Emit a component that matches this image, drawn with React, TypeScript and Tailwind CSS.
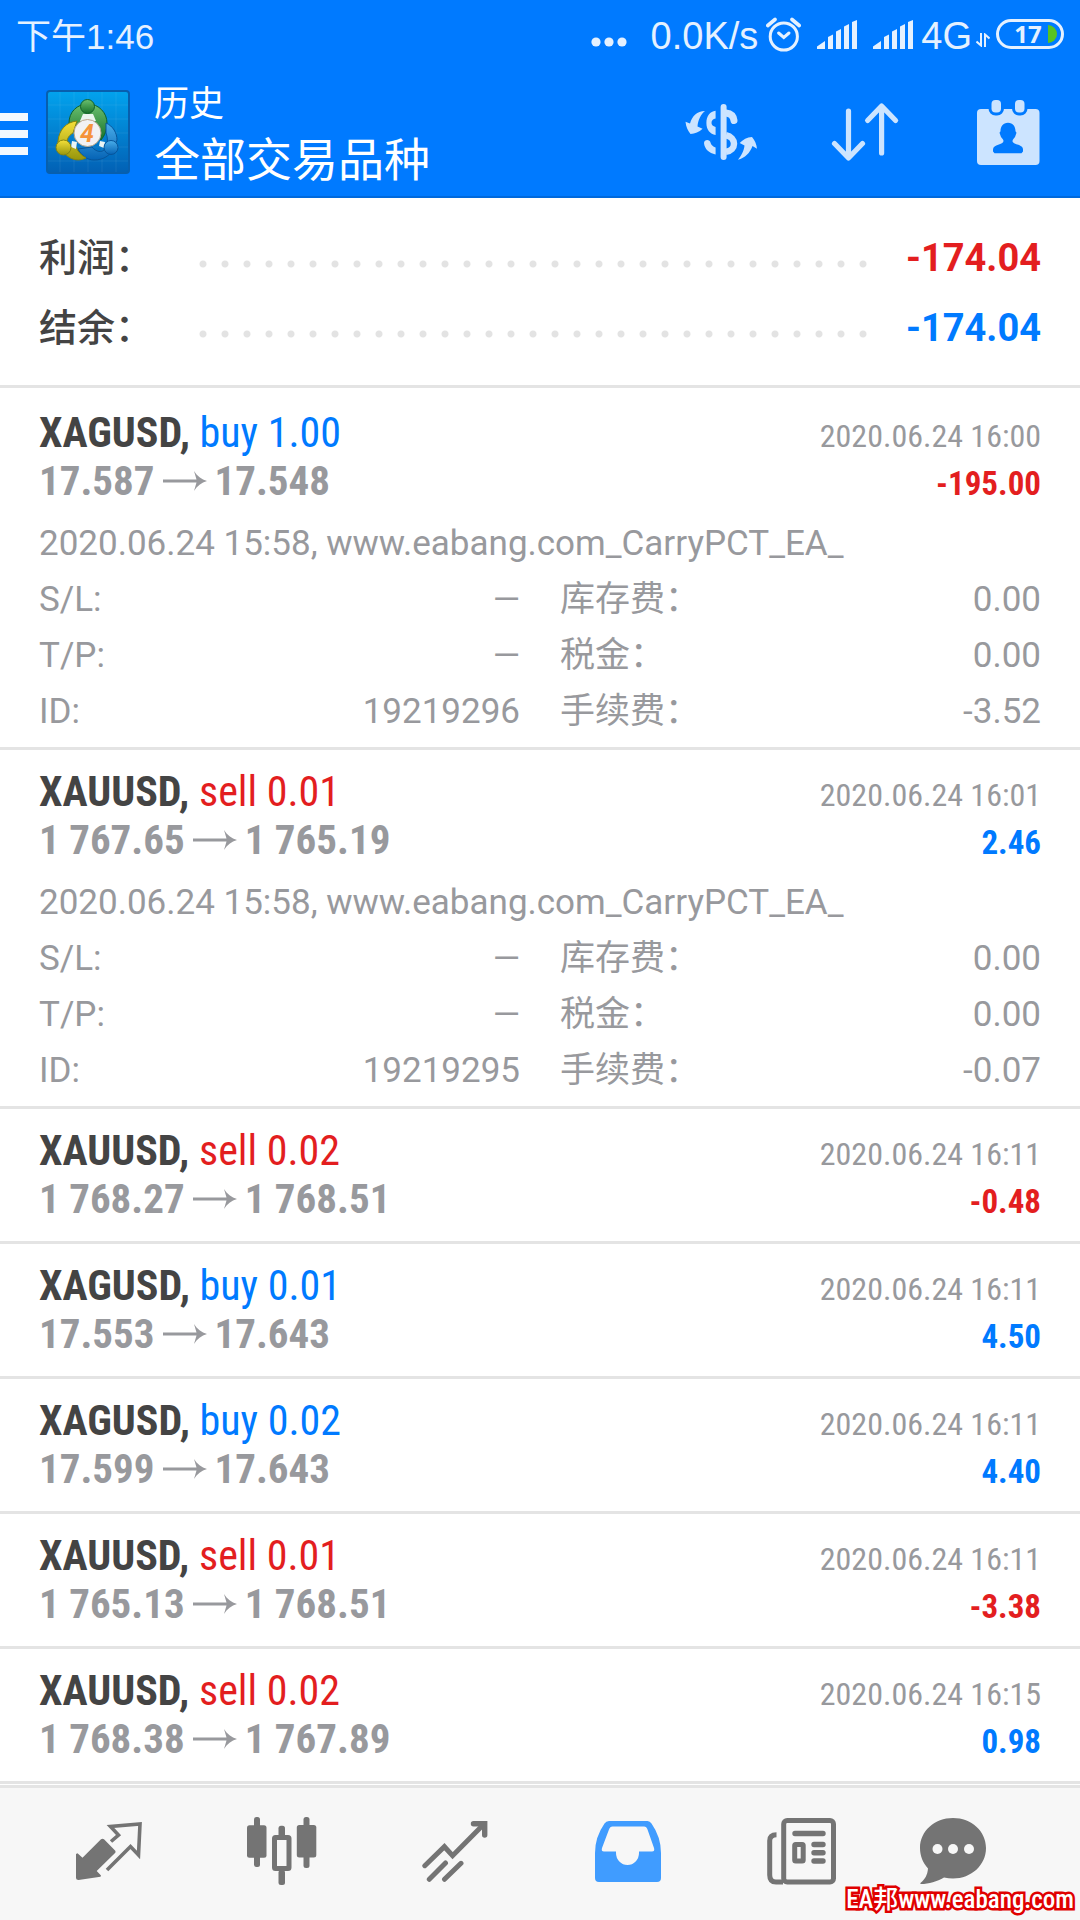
import type { ReactNode } from "react";

interface Details {
  opened: string;
  comment: string;
  id: string;
  swap: string;
  tax: string;
  fee: string;
}

interface Deal {
  symbol: string;
  side: "buy" | "sell";
  volume: string;
  from: string;
  to: string;
  time: string;
  profit: string;
  details?: Details;
}

const deals: Deal[] = [
  {
    symbol: "XAGUSD",
    side: "buy",
    volume: "1.00",
    from: "17.587",
    to: "17.548",
    time: "2020.06.24 16:00",
    profit: "-195.00",
    details: {
      opened: "2020.06.24 15:58",
      comment: "www.eabang.com_CarryPCT_EA_",
      id: "19219296",
      swap: "0.00",
      tax: "0.00",
      fee: "-3.52",
    },
  },
  {
    symbol: "XAUUSD",
    side: "sell",
    volume: "0.01",
    from: "1 767.65",
    to: "1 765.19",
    time: "2020.06.24 16:01",
    profit: "2.46",
    details: {
      opened: "2020.06.24 15:58",
      comment: "www.eabang.com_CarryPCT_EA_",
      id: "19219295",
      swap: "0.00",
      tax: "0.00",
      fee: "-0.07",
    },
  },
  { symbol: "XAUUSD", side: "sell", volume: "0.02", from: "1 768.27", to: "1 768.51", time: "2020.06.24 16:11", profit: "-0.48" },
  { symbol: "XAGUSD", side: "buy", volume: "0.01", from: "17.553", to: "17.643", time: "2020.06.24 16:11", profit: "4.50" },
  { symbol: "XAGUSD", side: "buy", volume: "0.02", from: "17.599", to: "17.643", time: "2020.06.24 16:11", profit: "4.40" },
  { symbol: "XAUUSD", side: "sell", volume: "0.01", from: "1 765.13", to: "1 768.51", time: "2020.06.24 16:11", profit: "-3.38" },
  { symbol: "XAUUSD", side: "sell", volume: "0.02", from: "1 768.38", to: "1 767.89", time: "2020.06.24 16:15", profit: "0.98" },
];

function Signal({ className }: { className: string }) {
  return (
    <svg width="40" height="29" viewBox="0 0 40 29" fill="currentColor" className={className}>
      <path d="M0 29v-2.5L8 21v8zM11 29V17l5-2.5V29zM19 29V11.500l5-2.5V29zM27 29V6.500l5-2.500V29zM35 29V2l5-2v29z" />
    </svg>
  );
}

function StatusBar() {
  return (
    <div className="flex h-16 items-center px-4 pt-1 text-[#e5f1ff]">
      <span className="pt-1 font-['Liberation_Sans','Noto_Sans_CJK_SC',sans-serif] text-[35px] leading-none">下午1:46</span>
      <div className="ml-auto flex items-center">
        <svg width="36" height="10" viewBox="0 0 36 10" fill="currentColor" className="mt-4 mr-6">
          <circle cx="5" cy="5" r="4.600" />
          <circle cx="18" cy="5" r="4.600" />
          <circle cx="31" cy="5" r="4.600" />
        </svg>
        <span className="pt-1 font-['Liberation_Sans',sans-serif] text-[38px] leading-none">0.0K/s</span>
        <svg width="35" height="35" viewBox="0 0 35 35" fill="none" stroke="currentColor" strokeWidth="3" strokeLinecap="round" className="ml-2">
          <circle cx="17.800" cy="19.500" r="13.600" />
          <path d="M12.600 16l5.200 4.500L23 16" />
          <path d="M1.800 8.500L9 2.500M33.200 8.500L26 2.500" strokeWidth="3.600" />
        </svg>
        <Signal className="ml-4" />
        <Signal className="ml-4" />
        <span className="ml-2 pt-1 font-['Liberation_Sans',sans-serif] text-[38px] leading-none">4G</span>
        <svg width="14" height="14" viewBox="0 0 14 14" fill="none" stroke="currentColor" strokeWidth="2" className="mt-3 ml-1">
          <path d="M5 0v12.500L.5 8.500M9 14V1.500l4.500 4" />
        </svg>
        <div className="relative ml-[6px] flex h-[30px] w-[68px] items-center justify-center rounded-full border-3 border-current">
          <span className="pr-1 font-['Open_Sans',sans-serif] text-[24px] leading-none font-bold">17</span>
          <span className="absolute right-1 h-[18px] w-[9px] rounded-r-full bg-[#58c322]" />
        </div>
      </div>
    </div>
  );
}

function AppLogo() {
  return (
    <svg width="84" height="84" viewBox="0 0 84 84" className="ml-[18px]">
      <defs>
        <linearGradient id="tile" x1="0" y1="0" x2="0" y2="1">
          <stop offset="0" stopColor="#02a3ee" />
          <stop offset="1" stopColor="#0260b4" />
        </linearGradient>
        <linearGradient id="green" x1="0" y1="0" x2="0" y2="1">
          <stop offset="0" stopColor="#6cc070" />
          <stop offset="1" stopColor="#17722a" />
        </linearGradient>
        <linearGradient id="yellow" x1="0" y1="0" x2="0" y2="1">
          <stop offset="0" stopColor="#f5e03a" />
          <stop offset="1" stopColor="#97960c" />
        </linearGradient>
        <linearGradient id="blue" x1="0" y1="0" x2="0" y2="1">
          <stop offset="0" stopColor="#4aaeea" />
          <stop offset="1" stopColor="#0563b5" />
        </linearGradient>
      </defs>
      <rect x="1" y="1" width="82" height="82" rx="3" fill="url(#tile)" stroke="#075fae" strokeWidth="2" />
      <path d="M14 2v80M28 2v80M42 2v80M56 2v80M70 2v80M2 15h80M2 29h80M2 43h80M2 57h80M2 71h80" stroke="#fff" strokeOpacity=".07" />
      {/* three figures holding each other in a ring */}
      <path d="M31 47l5-7 6-8 8 10 5 8c4-5 6-10 6-17 0-10-8-19-19-19s-19 8-19 19l4 1z" fill="url(#green)" stroke="#10602a" />
      <path d="M34 31h16l-3-7h-10z" fill="#e9f5ee" />
      <path d="M60 33c7 3 11 10 11 17l-3 8c-4 8-11 12-20 12-7 0-13-5-16-11l14-2c4 5 10 6 13 2 3-5 3-11 1-16z" fill="url(#blue)" stroke="#07559b" />
      <path d="M31 31c-11 1-18 9-19 20v5l7 8c7 7 15 7 21 4-5-3-8-6-10-11l-9-1c-1-6 1-10 6-13z" fill="url(#yellow)" stroke="#85840f" />
      <path d="M26 51l5 1-1 7-5-2zM54 51l5 1-1 6-5-2z" fill="#e9f5f5" />
      <circle cx="41.500" cy="16.500" r="7" fill="url(#green)" stroke="#10602a" />
      <circle cx="17.500" cy="57.500" r="7.500" fill="url(#yellow)" stroke="#85840f" />
      <circle cx="65" cy="57.500" r="7" fill="url(#blue)" stroke="#07559b" />
      <circle cx="41.500" cy="43" r="13.500" fill="#f1f1f3" stroke="#b8a58a" />
      <text x="41" y="52" textAnchor="middle" fontFamily="Roboto, sans-serif" fontWeight="700" fontStyle="italic" fontSize="25" fill="#f5933a">
        4
      </text>
    </svg>
  );
}

function Header() {
  return (
    <header className="border-b-2 border-[#0069dc] bg-[#007aff] text-white">
      <StatusBar />
      <div className="flex h-[132px] items-center pt-1 pr-10">
        <button type="button" aria-label="菜单" className="flex w-7 flex-col gap-[9px] pt-1">
          <span className="h-2 bg-[#f2f8ff]" />
          <span className="h-2 bg-[#f2f8ff]" />
          <span className="h-2 bg-[#f2f8ff]" />
        </button>
        <AppLogo />
        <div className="ml-6 font-['Noto_Sans_CJK_SC',sans-serif]">
          <div className="text-[35px] leading-[48px]">历史</div>
          <h1 className="text-[46px] leading-[62px]">全部交易品种</h1>
        </div>
        <div className="ml-auto flex items-center gap-[74px] text-[#cce4ff]">
          <button type="button" aria-label="交易品种">
            <svg width="72" height="60" viewBox="0 0 72 60" fill="currentColor">
              <path d="M38.600 5v50" stroke="currentColor" strokeWidth="6" strokeLinecap="round" />
              <path d="M41 11c4.500.5 7.500 3 8 7.500" fill="none" stroke="currentColor" strokeWidth="7" strokeLinecap="round" />
              <path d="M41 33.200c5 1 8 4.500 8 8.500s-3 7.500-8 8" fill="none" stroke="currentColor" strokeWidth="6.500" />
              <path d="M30.600 8.800C25 9.500 21.400 14 21.400 21s3.600 11 9.200 12v-8c-2.600-1-4.100-2-4.100-4 0-2.500 1.500-4 4.100-4.500z" />
              <path d="M19 41c0-4 6-4 6.500-.5.500 2.500 2.500 4 5.100 5v7C24 51 19.500 47 19 41z" />
              <path d="M20 9C12 9 7 14 5 21.500L.5 19.700C1 25 3 29 5.500 32c4.500-.5 8.500-2 12.100-5.300l-5.100-2.200C13 18 16 12 20 9z" />
              <path d="M53 57.700c3-3.700 6-8.700 6.500-14.200L54.700 41c3.300-3.500 7.300-5.700 12.300-6 3 3.500 4.500 7 5 11.700L67.500 44c-2.500 7-7.500 12-14.500 13.700z" />
            </svg>
          </button>
          <button type="button" aria-label="排序">
            <svg width="72" height="62" viewBox="0 0 72 62" fill="none" stroke="currentColor" strokeWidth="5.200" strokeLinecap="round" strokeLinejoin="round">
              <path d="M17.500 10v46.500M3.500 42.500l14 14.500 14-14.500" />
              <path d="M50.600 52V5.500M36.600 19.500l14-14.500 14 14.500" />
            </svg>
          </button>
          <button type="button" aria-label="日期范围">
            <svg width="63" height="65" viewBox="0 0 63 65" fill="currentColor">
              <rect y="9" width="62.500" height="56" rx="4" />
              <rect x="14.500" y="0" width="9.500" height="12.500" rx="4" stroke="#007aff" strokeWidth="6" paintOrder="stroke" />
              <rect x="38" y="0" width="9.500" height="12.500" rx="4" stroke="#007aff" strokeWidth="6" paintOrder="stroke" />
              <path
                d="M31 22.700c5 0 7.500 4 7.500 8.500l1 1.500-1.500 4.300c-1 1.500-2.500 2.500-2.500 4 0 4 10.500 3 10.500 8.500v2l-1.500 1.800h-27L16 51.500v-2c0-5.500 10.500-4.500 10.500-8.500 0-1.500-1.500-2.500-2.500-4l-1.500-4.300 1-1.500c0-4.500 2.500-8.500 7.500-8.500z"
                fill="#007aff"
              />
            </svg>
          </button>
        </div>
      </div>
    </header>
  );
}

function SummaryRow({ label, value, valueClass }: { label: string; value: string; valueClass: string }) {
  return (
    <div className="flex h-[70px]">
      <dt className="w-[153px] font-['Noto_Sans_CJK_SC',sans-serif] text-[38px] leading-[64px] font-medium text-[#444444]">{label}</dt>
      <span className="mt-[37px] h-2 flex-1 bg-[radial-gradient(circle,#e3e3e3_3px,transparent_4px)] bg-size-[22px_8px] bg-repeat-x" />
      <dd className={`w-[166px] text-right text-[38px] leading-[70px] font-bold ${valueClass}`}>{value}</dd>
    </div>
  );
}

function DetailCell({ label, value }: { label: string; value: string }) {
  return (
    <div className="flex justify-between">
      <dt>{label}</dt>
      <dd>{value}</dd>
    </div>
  );
}

function DealRow({ deal }: { deal: Deal }) {
  const { details } = deal;
  const profitClass = deal.profit.startsWith("-") ? "text-[#e31e1f]" : "text-[#007aff]";

  return (
    <li className="border-b-3 border-[#e4e4e4] px-[39px] pt-[18px]">
      <div className="flex h-12 items-baseline justify-between font-['Roboto_Condensed',Roboto,sans-serif] leading-[48px]">
        <div className="text-[42px]">
          <span className="font-bold text-[#444444]">{deal.symbol},</span>{" "}
          <span className={deal.side === "buy" ? "text-[#007aff]" : "text-[#e31e1f]"}>
            {deal.side} {deal.volume}
          </span>
        </div>
        <time className="text-[32px]">{deal.time}</time>
      </div>
      <div className="flex h-12 items-baseline justify-between font-['Roboto_Condensed',Roboto,sans-serif] leading-[48px] font-bold">
        <div className="flex items-center gap-2 text-[41px]">
          <span>{deal.from}</span>
          <svg width="44" height="20" viewBox="0 0 44 20" fill="currentColor">
            <path d="M0 8.500h33.500L31 0c3 5 7.500 8.500 13 10-5.500 1.500-10 5-13 10l2.500-8.500H0z" />
          </svg>
          <span>{deal.to}</span>
        </div>
        <span className={`text-[33px] ${profitClass}`}>{deal.profit}</span>
      </div>
      {details ? (
        <div className="pt-[11px] pb-[7px] text-[35px] leading-[56px]">
          <p>
            {details.opened}, {details.comment}
          </p>
          <dl className="grid grid-cols-2 gap-x-10">
            <DetailCell label="S/L:" value="—" />
            <DetailCell label="库存费：" value={details.swap} />
            <DetailCell label="T/P:" value="—" />
            <DetailCell label="税金：" value={details.tax} />
            <DetailCell label="ID:" value={details.id} />
            <DetailCell label="手续费：" value={details.fee} />
          </dl>
        </div>
      ) : (
        <div className="h-[18px]" />
      )}
    </li>
  );
}

function NavItem({ label, active, children }: { label: string; active?: boolean; children: ReactNode }) {
  return (
    <a href="#" aria-label={label} className={`flex justify-center ${active ? "text-[#409cff]" : "text-[#747474]"}`}>
      {children}
    </a>
  );
}

function BottomNav() {
  return (
    <nav className="relative mt-auto grid h-[135px] grid-cols-[repeat(5,173fr)_130fr] items-center border-t-3 border-[#e4e4e4] bg-[#f7f7f7] pr-[62px] pb-[6px] pl-[22px]">
      <NavItem label="行情">
        <svg width="66" height="58" viewBox="0 0 66 58" fill="currentColor">
          <path d="M0 32l1.500-.7 5 4.400L25 17.300q1.500-1 3 0L39.300 28.700q.5 1 0 2L20.700 49l4.300 4.500-.5 1.300L2.500 58Q0 58 0 56z" />
          <path d="M35 19.500l7.500-6.500-8-8.500L64 2l-1.500 31-8-8.500L31 48" fill="none" stroke="currentColor" strokeWidth="3.600" />
        </svg>
      </NavItem>
      <NavItem label="图表">
        <svg width="70" height="68" viewBox="0 0 70 68" fill="currentColor">
          <rect y="8.300" width="19.500" height="32.500" rx="2.500" />
          <rect x="7" width="6" height="50" rx="2.500" />
          <rect x="27.500" y="20.500" width="14.500" height="31" rx="1" fill="none" stroke="currentColor" strokeWidth="5" />
          <rect x="31.500" y="8.700" width="6.500" height="12" rx="2.500" />
          <rect x="31.500" y="53" width="6.500" height="15" rx="2.500" />
          <rect x="49.800" y="8" width="19.500" height="32.500" rx="2.500" />
          <rect x="56.500" width="6" height="51" rx="2.500" />
        </svg>
      </NavItem>
      <NavItem label="交易">
        <svg width="66" height="62" viewBox="0 0 66 62" fill="none" stroke="currentColor" strokeWidth="5" strokeLinecap="round">
          <path d="M2.800 45.700l19.600-19 8.200 9L62 4" />
          <path d="M51.500 3.700h11.200V15" strokeWidth="5.400" />
          <path d="M7.300 59.300L23.500 43M22.500 59.300l16.500-16" />
        </svg>
      </NavItem>
      <NavItem label="历史" active>
        <svg width="66" height="61" viewBox="0 0 66 61" fill="currentColor" fillRule="evenodd">
          <path d="M14 0h38.500q2.500 0 4 2.500Q66 16 66 32v25q0 4-4 4H4q-4 0-4-4V32Q0 16 9.500 2.500 11 0 14 0zM17.500 5.500q-2.500 0-3.500 3L7 27q-1 3.500 2 3.500h12V32a11.500 12 0 0 0 23 0v-1.500h13q3 0 2-3.500L52.500 8.500q-1-3-3.500-3z" />
        </svg>
      </NavItem>
      <NavItem label="新闻">
        <svg width="69" height="67" viewBox="0 0 69 67" fill="none" stroke="currentColor" strokeWidth="5">
          <rect x="16.700" y="2.500" width="49.800" height="61.500" rx="3.500" />
          <path d="M9.500 16.700q-6.800 0-6.800 6V57q0 7 6.300 7h7" />
          <path d="M28 15.500h28M47 26.500h9M47 34.800h9M47 43h9" strokeWidth="5.400" strokeLinecap="round" />
          <rect x="27.700" y="26.500" width="8.500" height="16.500" rx="1" />
        </svg>
      </NavItem>
      <NavItem label="消息">
        <svg width="66" height="66" viewBox="0 0 66 66" fill="currentColor">
          <path d="M33 0c18.500 0 33 13 33 30S51.500 60.500 33 60.500c-3 0-6-.3-9-1C17 63.500 9 66 1 66c-1 0-1-.8 0-1.500C5 61 7.500 57 8 50.500 3 45 0 38 0 30 0 13 14.500 0 33 0z" />
          <circle cx="17.500" cy="31" r="5" fill="#f7f7f7" />
          <circle cx="33" cy="31" r="5" fill="#f7f7f7" />
          <circle cx="49" cy="31" r="5" fill="#f7f7f7" />
        </svg>
      </NavItem>
      <span className="absolute right-[6px] bottom-1 font-['Roboto_Condensed','Noto_Sans_CJK_SC',sans-serif] text-[25px] leading-[32px] font-medium text-white [-webkit-text-stroke:5px_#e00000] [paint-order:stroke_fill]">
        EA邦www.eabang.com
      </span>
    </nav>
  );
}

export default function App() {
  return (
    <div className="flex min-h-screen flex-col bg-white font-[Roboto,'Noto_Sans_CJK_SC',sans-serif] text-[#98999d]">
      <Header />
      <main>
        <dl className="border-b-3 border-[#e4e4e4] px-[39px] pt-[25px] pb-[22px]">
          <SummaryRow label="利润：" value="-174.04" valueClass="text-[#e31e1f]" />
          <SummaryRow label="结余：" value="-174.04" valueClass="text-[#007aff]" />
        </dl>
        <ul className="pt-[3px]">
          {deals.map((deal, i) => (
            <DealRow key={i} deal={deal} />
          ))}
        </ul>
      </main>
      <BottomNav />
    </div>
  );
}
